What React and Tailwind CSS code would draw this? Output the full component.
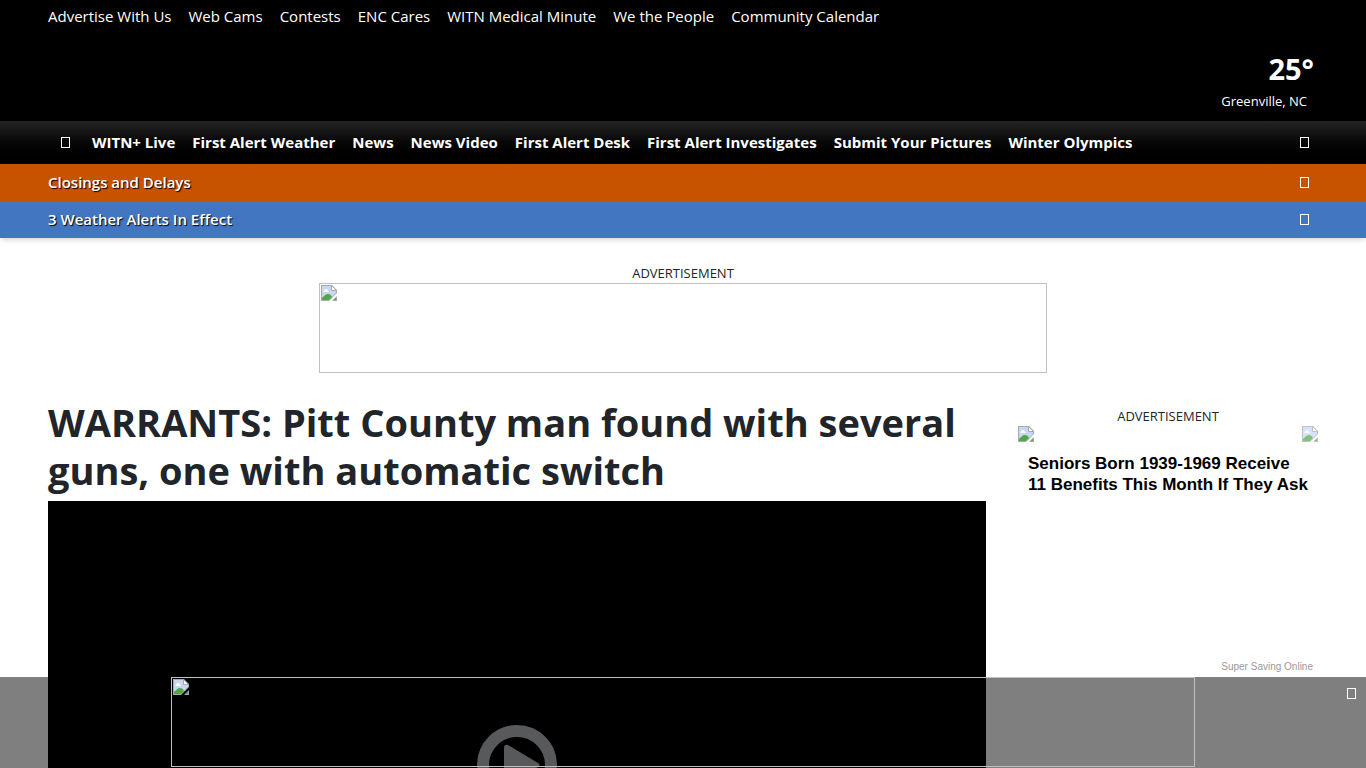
const topLinks = [
  "Advertise With Us",
  "Web Cams",
  "Contests",
  "ENC Cares",
  "WITN Medical Minute",
  "We the People",
  "Community Calendar",
];

const navLinks = [
  "WITN+ Live",
  "First Alert Weather",
  "News",
  "News Video",
  "First Alert Desk",
  "First Alert Investigates",
  "Submit Your Pictures",
  "Winter Olympics",
];

function BoxGlyph() {
  return <span aria-hidden="true" className="block h-[11px] w-[9px] border border-white" />;
}

function BrokenImage({ className = "" }) {
  return (
    <svg className={`h-4 w-4 shrink-0 ${className}`} viewBox="0 0 16 16" aria-hidden="true">
      {/* page */}
      <path d="M0 0h11l5 5v3l-8 8H0z" fill="#a9a9a9" />
      <path d="M1 1h10l4 4v3l-7 7H1z" fill="#c6d6f5" />
      {/* cloud */}
      <path d="M3 6c0-1 1-2 2-2s2 1 2 2c1 0 1 1 1 1H2z" fill="#fff" />
      {/* hill */}
      <path d="M1 15v-2c2-2 4-4 6-4 2 0 3 1 4 3l-3 3z" fill="#53a647" />
      {/* folded corner */}
      <path d="M10.5 0.5v5h5z" fill="#fff" stroke="#a9a9a9" />
      {/* torn off corner */}
      <path d="M16 11v5h-5z" fill="#a9a9a9" />
      <path d="M15 12.5V15h-2.500z" fill="#53a647" />
    </svg>
  );
}

function AlertBar({ title, className }) {
  return (
    <div className={`flex h-[37px] items-center justify-between px-12 ${className}`}>
      <a href="#" className="pb-0.5 text-[15px] leading-6 font-semibold [text-shadow:1px_1px_1px_#000]">
        {title}
      </a>
      <button aria-label={`Close ${title}`} className="px-[9px] py-2">
        <BoxGlyph />
      </button>
    </div>
  );
}

export default function App() {
  return (
    <div className="min-h-screen bg-white font-['Segoe_UI','Open_Sans','Noto_Sans',sans-serif] text-[#212529]">
      <header className="relative bg-black text-white shadow-md">
        <nav aria-label="Quick links" className="flex gap-[17px] px-12 py-1 text-[15px] leading-6 whitespace-nowrap">
          {topLinks.map((link) => (
            <a key={link} href="#">
              {link}
            </a>
          ))}
        </nav>

        <div className="flex h-[89px] flex-col items-end px-12 pt-4">
          <p className="pr-1 text-[29px] leading-[42px] font-bold">25°</p>
          <p className="pr-[11px] text-[13px] leading-[22px]">Greenville, NC</p>
        </div>

        <div className="flex h-[43px] items-center justify-between bg-linear-to-b from-[#242424] to-black px-12">
          <nav aria-label="Main" className="flex items-center text-[15px] leading-6 font-bold whitespace-nowrap">
            <button aria-label="Menu" className="px-[13px] py-2">
              <BoxGlyph />
            </button>
            <div className="flex gap-[17px] pb-0.5 pl-[9px]">
              {navLinks.map((link) => (
                <a key={link} href="#">
                  {link}
                </a>
              ))}
            </div>
          </nav>
          <button aria-label="Search" className="px-[9px] py-2">
            <BoxGlyph />
          </button>
        </div>

        <AlertBar title="Closings and Delays" className="bg-[#c75300]" />
        <AlertBar title="3 Weather Alerts In Effect" className="bg-[#4376c1]" />
      </header>

      <section className="flex flex-col items-center px-12 pt-[25px]">
        <p className="text-[13px] leading-5">ADVERTISEMENT</p>
        <a href="#" aria-label="Advertisement" className="block h-[90px] w-full max-w-[728px] border border-[#c0c0c0] p-px">
          <BrokenImage />
        </a>
      </section>

      <div className="flex gap-8 px-12 pt-[25px]">
        <main className="min-w-0 flex-1">
          <h1 className="pb-[7px] text-[38px] leading-[48px] font-bold">
            WARRANTS: Pitt County man found with several guns, one with automatic switch
          </h1>
          <div className="flex aspect-video items-center justify-center bg-black">
            <button aria-label="Play video">
              <svg className="h-20 w-20" viewBox="0 0 80 80">
                <circle cx="40" cy="40" r="34" fill="none" stroke="#b0b2b5" strokeWidth="12" />
                <path d="M27 23q0-4 4-3l30 18q3 2 0 4L31 60q-4 1-4-3z" fill="#b0b2b5" />
              </svg>
            </button>
          </div>
        </main>

        <aside className="w-[300px] shrink-0 pt-2">
          <p className="text-center text-[13px] leading-5">ADVERTISEMENT</p>
          <div className="flex h-[250px] flex-col font-['Liberation_Sans',Arial,sans-serif]">
            <div className="flex justify-between">
              <BrokenImage />
              <BrokenImage className="opacity-70" />
            </div>
            <a href="#" className="px-[10px] pt-[11px] text-[17px] leading-[21px] font-bold whitespace-nowrap text-black">
              Seniors Born 1939-1969 Receive
              <br />
              11 Benefits This Month If They Ask
            </a>
            <a href="#" className="mt-auto self-end pr-[5px] pb-[3px] text-[10px] leading-3 text-[#999]">
              Super Saving Online
            </a>
          </div>
        </aside>
      </div>

      <div className="fixed inset-x-0 bottom-0 flex justify-center bg-black/50 pb-px">
        <a href="#" aria-label="Advertisement" className="block h-[90px] w-full max-w-[1024px] border border-[#c0c0c0] p-px">
          <BrokenImage />
        </a>
        <button aria-label="Close advertisement" className="absolute top-0 right-0 px-[10px] py-[11px]">
          <BoxGlyph />
        </button>
      </div>
    </div>
  );
}
